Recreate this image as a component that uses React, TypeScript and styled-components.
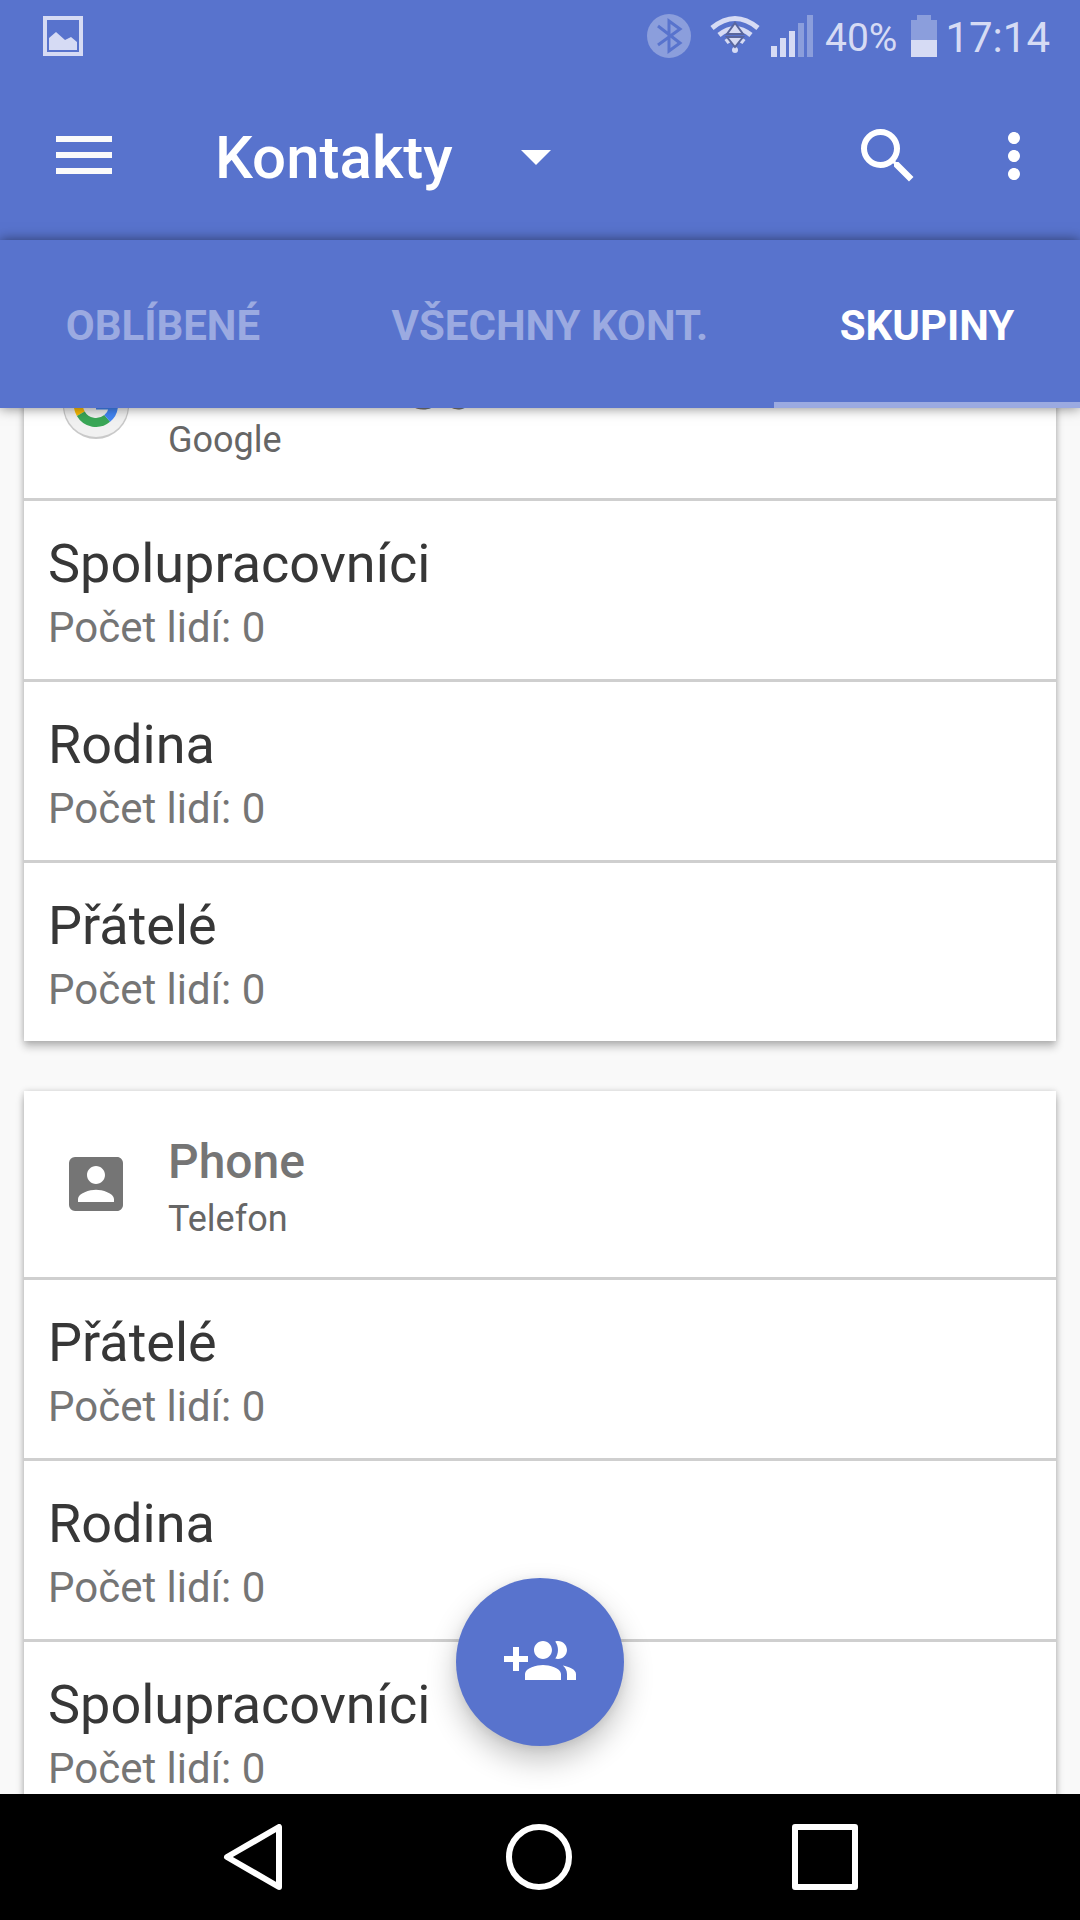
import { useLayoutEffect, useRef, useState, type ReactNode } from "react";
import styled, { createGlobalStyle } from "styled-components";

const blue = "#5873cd";
const faded = "#9baae1";
const statusTint = "#d6dbf4";
const statusDim = "#8b9edc";

const GlobalStyle = createGlobalStyle`
  * { box-sizing: border-box; }
  html, body { margin: 0; padding: 0; }
  body {
    background: #f9f9f9;
    font-family: Roboto, "Noto Sans", sans-serif;
  }
  button { font: inherit; border: 0; background: none; padding: 0; margin: 0; cursor: pointer; }
  h1, h2, h3, p, ul { margin: 0; padding: 0; }
  svg { display: block; flex: none; }
`;

const Screen = styled.div`
  display: flex;
  flex-direction: column;
  height: 100vh;
  overflow: hidden;
`;

const StatusBar = styled.header`
  display: flex;
  align-items: center;
  height: 72px;
  flex: none;
  padding: 0 30px 0 43px;
  background: ${blue};
  color: ${statusTint};
`;

const StatusIcons = styled.div`
  display: flex;
  align-items: center;
  margin-left: auto;
`;

const StatusText = styled.span<{ $size: number }>`
  display: block;
  padding-top: 3px;
  font-size: ${(p) => p.$size}px;
  line-height: 48px;
`;

const StatusIcon = styled.span<{ $before: number }>`
  margin-left: ${(p) => p.$before}px;
`;

const Toolbar = styled.div`
  display: flex;
  align-items: center;
  height: 168px;
  flex: none;
  padding: 0 30px 0 48px;
  background: ${blue};
  color: #fff;
`;

const IconButton = styled.button`
  display: flex;
  align-items: center;
  justify-content: center;
  width: 72px;
  height: 72px;
  color: inherit;
`;

const TitleButton = styled.button`
  display: flex;
  align-items: center;
  gap: 47px;
  margin-left: 95px;
  color: inherit;
`;

const Title = styled.span`
  padding-top: 4px;
  font-size: 60px;
  font-weight: 500;
  line-height: 72px;
`;

const Actions = styled.div`
  display: flex;
  gap: 54px;
  margin-left: auto;
`;

const Tabs = styled.nav`
  position: relative;
  z-index: 2;
  display: flex;
  height: 168px;
  flex: none;
  background: ${blue};
  box-shadow: 0 0 12px rgba(0, 0, 0, 0.5);
`;

const Tab = styled.button<{ $active: boolean }>`
  flex: 1 1 auto;
  padding: 10px 65px 0;
  border-bottom: 6px solid ${(p) => (p.$active ? faded : "transparent")};
  color: ${(p) => (p.$active ? "#fff" : faded)};
  font-size: 42px;
  font-weight: 700;
  line-height: 48px;
  white-space: nowrap;
`;

const Body = styled.div`
  position: relative;
  display: flex;
  flex: 1;
  min-height: 0;
`;

const Scroller = styled.main`
  flex: 1;
  overflow-y: auto;
  scrollbar-width: none;
  padding: 48px 24px;
`;

const Card = styled.section`
  background: #fff;
  box-shadow: 0 6px 8px rgba(0, 0, 0, 0.24), 0 0 6px rgba(0, 0, 0, 0.16);

  & + & { margin-top: 50px; }
`;

const CardHeader = styled.div`
  display: flex;
  align-items: center;
  gap: 36px;
  height: 186px;
  padding: 0 36px;
`;

const AccountText = styled.div`
  padding-top: 10px;
`;

const AccountName = styled.h2`
  color: #757575;
  font-size: 48px;
  font-weight: 500;
  line-height: 60px;
`;

const AccountType = styled.p`
  color: #666;
  font-size: 36px;
  line-height: 54px;
`;

const GroupRow = styled.button`
  display: flex;
  flex-direction: column;
  align-items: flex-start;
  justify-content: flex-start;
  width: 100%;
  height: 181px;
  padding: 30px 24px 0;
  border-top: 3px solid #cfcfcf;
  text-align: left;
`;

const GroupName = styled.span`
  color: #373737;
  font-size: 54px;
  line-height: 66px;
`;

const GroupCount = styled.span`
  color: #757575;
  font-size: 42px;
  line-height: 62px;
`;

const Fab = styled.button`
  position: absolute;
  left: 50%;
  bottom: 48px;
  display: flex;
  align-items: center;
  justify-content: center;
  width: 168px;
  height: 168px;
  margin-left: -84px;
  border-radius: 50%;
  background: ${blue};
  color: #fff;
  box-shadow: 0 14px 30px rgba(0, 0, 0, 0.24), 0 2px 10px rgba(0, 0, 0, 0.08);
`;

const NavBar = styled.footer`
  display: grid;
  grid-template-columns: repeat(3, 1fr);
  height: 126px;
  flex: none;
  padding: 0 112px 0 110px;
  background: #000;
  color: #fff;
`;

const NavButton = styled.button`
  display: flex;
  align-items: center;
  justify-content: center;
  color: inherit;
`;

const Material = ({ d }: { d: string }) => (
  <svg width="72" height="72" viewBox="0 0 24 24" fill="currentColor" aria-hidden="true">
    <path d={d} />
  </svg>
);

const PictureIcon = () => (
  <svg width="40" height="40" viewBox="0 0 40 40" aria-hidden="true">
    <rect x="2" y="2" width="36" height="36" fill="none" stroke={statusTint} strokeWidth="4" />
    <path d="M6 34V22l7-6 9 8 6-3 6 5v8z" fill={statusTint} />
  </svg>
);

const BluetoothIcon = () => (
  <svg width="44" height="44" viewBox="0 0 44 44" aria-hidden="true">
    <circle cx="22" cy="22" r="22" fill={statusDim} />
    <path d="M11 12l22 17-11 8V7l11 8-22 16" fill="none" stroke={blue} strokeWidth="3" />
  </svg>
);

const WifiIcon = () => (
  <svg width="50" height="44" viewBox="0 0 50 44" aria-hidden="true">
    <g fill="none" stroke={statusTint} strokeWidth="5">
      <path d="M2 14Q25-5 48 14" />
      <path d="M9 21Q25 8 41 21" />
      <path d="M16 28Q25 21 34 28" />
    </g>
    <circle cx="25" cy="36" r="3" fill={statusTint} />
    <g fill={statusTint} stroke="#59669d" strokeWidth="2">
      <path d="M25 9l8 11H17z" />
      <path d="M17 23h16l-8 10z" />
    </g>
  </svg>
);

const SignalIcon = () => (
  <svg width="42" height="42" viewBox="0 0 42 42" fill={statusTint} aria-hidden="true">
    <path d="M0 31h6v11H0zM9 23h6v19H9zM18 16h6v26h-6z" />
    <path d="M27 8h6v34h-6zM36 0h6v42h-6z" fill={statusDim} />
  </svg>
);

const BatteryIcon = () => (
  <svg width="26" height="42" viewBox="0 0 26 42" aria-hidden="true">
    <path d="M6 0h14v5h6v20H0V5h6z" fill={statusDim} />
    <path d="M0 25h26v17H0z" fill={statusTint} />
  </svg>
);

const MenuIcon = () => (
  <svg width="56" height="40" viewBox="0 0 56 40" fill="#fafafa" aria-hidden="true">
    <path d="M0 0h56v6H0zM0 16h56v6H0zM0 32h56v6H0z" />
  </svg>
);

const GoogleIcon = () => (
  <svg width="72" height="72" viewBox="0 0 72 72" aria-hidden="true">
    <circle cx="36" cy="37" r="33" fill="#c9c9c9" />
    <circle cx="36" cy="36" r="32" fill="#f1f1f1" />
    <g fill="none" strokeWidth="9">
      <path d="M48.400 23.600A17.500 17.500 0 0 0 20.800 27.300" stroke="#ea4335" />
      <path d="M20.800 27.300A17.500 17.500 0 0 0 20.800 44.700" stroke="#fbbc05" />
      <path d="M20.800 44.700A17.500 17.500 0 0 0 47.200 49.400" stroke="#3aa757" />
      <path d="M47.200 49.400A17.500 17.500 0 0 0 53.500 36H36" stroke="#4285f4" />
    </g>
  </svg>
);

const AccountIcon = () => (
  <svg width="72" height="72" viewBox="0 0 24 24" fill="#757575" aria-hidden="true">
    <path d="M3 5v14a2 2 0 0 0 2 2h14c1.100 0 2-.9 2-2V5c0-1.100-.9-2-2-2H5a2 2 0 0 0-2 2zm12 4c0 1.660-1.340 3-3 3s-3-1.340-3-3 1.340-3 3-3 3 1.340 3 3zm-9 8c0-2 4-3.100 6-3.100s6 1.100 6 3.100v1H6v-1z" />
  </svg>
);

const NavIcon = ({ d }: { d: string }) => (
  <svg width="66" height="66" viewBox="0 0 66 66" fill="none" stroke="currentColor" strokeWidth="6" strokeLinejoin="round" aria-hidden="true">
    <path d={d} />
  </svg>
);

const searchPath =
  "M15.500 14h-.79l-.28-.27A6.471 6.471 0 0 0 16 9.500 6.500 6.500 0 1 0 9.500 16c1.610 0 3.090-.59 4.230-1.570l.27.28v.79l5 4.990L20.490 19l-4.990-5zm-6 0C7.010 14 5 11.990 5 9.500S7.010 5 9.500 5 14 7.010 14 9.500 11.990 14 9.500 14z";
const morePath =
  "M12 8c1.100 0 2-.9 2-2s-.9-2-2-2-2 .9-2 2 .9 2 2 2zm0 2c-1.100 0-2 .9-2 2s.9 2 2 2 2-.9 2-2-.9-2-2-2zm0 6c-1.100 0-2 .9-2 2s.9 2 2 2 2-.9 2-2-.9-2-2-2z";
const groupAddPath =
  "M8 10H5V7H3v3H0v2h3v3h2v-3h3v-2zm10 1c1.660 0 2.990-1.340 2.990-3S19.660 5 18 5c-.32 0-.63.050-.91.140.57.810.9 1.790.9 2.860s-.34 2.040-.9 2.860c.28.090.59.140.91.140zm-5 0c1.660 0 2.990-1.340 2.990-3S14.660 5 13 5c-1.660 0-3 1.340-3 3s1.340 3 3 3zm6.620 2.160c.83.730 1.380 1.660 1.380 2.840v2h3v-2c0-1.540-2.370-2.490-4.380-2.840zM13 13c-2 0-6 1-6 3v2h12v-2c0-2-4-3-6-3z";

interface Account {
  name: string;
  type: string;
  icon: ReactNode;
  groups: string[];
}

const accounts: Account[] = [
  { name: "uzivatel.01@gmail.com", type: "Google", icon: <GoogleIcon />, groups: ["Spolupracovníci", "Rodina", "Přátelé"] },
  { name: "Phone", type: "Telefon", icon: <AccountIcon />, groups: ["Přátelé", "Rodina", "Spolupracovníci"] },
];

const tabs = ["OBLÍBENÉ", "VŠECHNY KONT.", "SKUPINY"];

const initialScroll = 144;

export default function App() {
  const [active, setActive] = useState(2);
  const scroller = useRef<HTMLElement>(null);

  useLayoutEffect(() => {
    if (scroller.current) scroller.current.scrollTop = initialScroll;
  }, []);

  return (
    <Screen>
      <GlobalStyle />
      <StatusBar>
        <PictureIcon />
        <StatusIcons>
          <BluetoothIcon />
          <StatusIcon $before={19}><WifiIcon /></StatusIcon>
          <StatusIcon $before={11}><SignalIcon /></StatusIcon>
          <StatusIcon $before={12}><StatusText $size={39}>40%</StatusText></StatusIcon>
          <StatusIcon $before={14}><BatteryIcon /></StatusIcon>
          <StatusIcon $before={8}><StatusText $size={42}>17:14</StatusText></StatusIcon>
        </StatusIcons>
      </StatusBar>

      <Toolbar>
        <IconButton aria-label="Nabídka"><MenuIcon /></IconButton>
        <TitleButton>
          <Title>Kontakty</Title>
          <Material d="M7 10l5 5 5-5z" />
        </TitleButton>
        <Actions>
          <IconButton aria-label="Hledat"><Material d={searchPath} /></IconButton>
          <IconButton aria-label="Další možnosti"><Material d={morePath} /></IconButton>
        </Actions>
      </Toolbar>

      <Tabs>
        {tabs.map((label, i) => (
          <Tab key={label} $active={i === active} onClick={() => setActive(i)}>
            {label}
          </Tab>
        ))}
      </Tabs>

      <Body>
        <Scroller ref={scroller}>
          {accounts.map((account) => (
            <Card key={account.name}>
              <CardHeader>
                {account.icon}
                <AccountText>
                  <AccountName>{account.name}</AccountName>
                  <AccountType>{account.type}</AccountType>
                </AccountText>
              </CardHeader>
              {account.groups.map((group) => (
                <GroupRow key={group}>
                  <GroupName>{group}</GroupName>
                  <GroupCount>Počet lidí: 0</GroupCount>
                </GroupRow>
              ))}
            </Card>
          ))}
        </Scroller>
        <Fab aria-label="Přidat skupinu"><Material d={groupAddPath} /></Fab>
      </Body>

      <NavBar>
        <NavButton aria-label="Zpět"><NavIcon d="M59 3v60L7 33z" /></NavButton>
        <NavButton aria-label="Domů"><NavIcon d="M33 3a30 30 0 1 0 0 60a30 30 0 1 0 0-60z" /></NavButton>
        <NavButton aria-label="Přehled"><NavIcon d="M3 3h60v60H3z" /></NavButton>
      </NavBar>
    </Screen>
  );
}
